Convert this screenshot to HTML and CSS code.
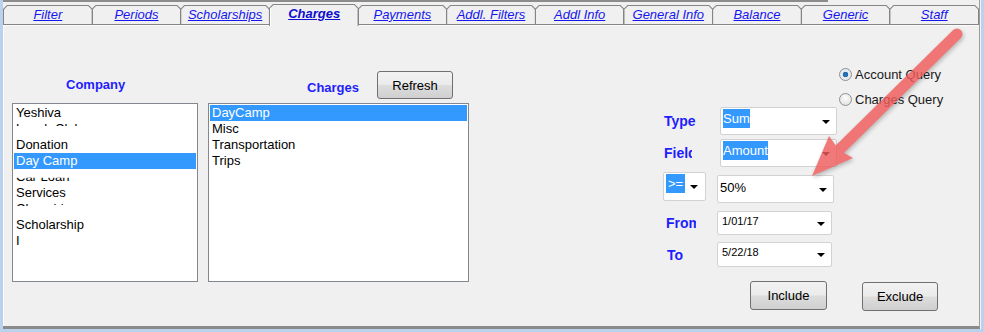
FILE: index.html
```html
<!DOCTYPE html>
<html>
<head lang="en">
    <meta charset="utf-8">
    <title>Charges</title>
    <link rel="stylesheet" href="styles.css">
</head>
<body>
<div class="frame">
    <div class="topline"></div>
    <ul class="tabs">
        <li><a href="#">Filter</a></li>
        <li><a href="#">Periods</a></li>
        <li><a href="#">Scholarships</a></li>
        <li class="active"><a href="#">Charges</a></li>
        <li><a href="#">Payments</a></li>
        <li><a href="#">Addl. Filters</a></li>
        <li><a href="#">Addl Info</a></li>
        <li><a href="#">General Info</a></li>
        <li><a href="#">Balance</a></li>
        <li><a href="#">Generic</a></li>
        <li><a href="#">Staff</a></li>
    </ul>
    <div class="panel">
        <div class="col company">
            <div class="head">
                <label class="title">Company</label>
            </div>
            <ul class="listbox">
                <li>Yeshiva</li>
                <li><span class="cut-top">Lunch Club</span></li>
                <li>Donation</li>
                <li class="sel">Day Camp</li>
                <li><span class="cut-bottom">Car Loan</span></li>
                <li>Services</li>
                <li><span class="cut-top">Chaveirim</span></li>
                <li>Scholarship</li>
                <li>I</li>
            </ul>
        </div>
        <div class="col charges">
            <div class="head">
                <label class="title">Charges</label>
                <button type="button" class="btn refresh">Refresh</button>
            </div>
            <ul class="listbox">
                <li class="sel">DayCamp</li>
                <li>Misc</li>
                <li>Transportation</li>
                <li>Trips</li>
            </ul>
        </div>
        <div class="query">
            <div class="radios">
                <div class="radio checked"><i></i>Account Query</div>
                <div class="radio"><i></i>Charges Query</div>
            </div>
            <div class="row r-type">
                <label class="lbl">Type</label>
                <div class="select"><span class="hl">Sum</span><b></b></div>
            </div>
            <div class="row r-field">
                <label class="lbl">Field</label>
                <div class="select"><span class="hl">Amount</span><b></b></div>
            </div>
            <div class="row r-op">
                <div class="select op"><span class="hl">&gt;=</span><b></b></div>
                <div class="select pct"><span>50%</span><b></b></div>
            </div>
            <div class="row r-from">
                <label class="lbl">From</label>
                <div class="select date"><span>1/01/17</span><b></b></div>
            </div>
            <div class="row r-to">
                <label class="lbl">To</label>
                <div class="select date"><span>5/22/18</span><b></b></div>
            </div>
            <div class="buttons">
                <button type="button" class="btn include">Include</button>
                <button type="button" class="btn exclude">Exclude</button>
            </div>
        </div>
    </div>
    <svg class="arrow" width="984" height="332" viewBox="0 0 984 332">
        <line x1="957" y1="34" x2="840" y2="149" stroke="#f05c5c" stroke-width="11" stroke-linecap="round"/>
        <polygon points="812,176 829,136 839,150 853,158" fill="#f05c5c"/>
    </svg>
</div>
</body>
</html>
```

FILE: styles.css
```css
body {
    margin: 0;
    background-color: #bad2ec;
    font-family: "Liberation Sans", Arial, sans-serif;
    font-size: 13px;
}

ul {
    margin: 0;
    padding: 0;
    list-style: none;
}

.frame {
    position: relative;
    margin-left: 3px;
    width: 976px;
    height: 326px;
    background-color: #f0f0f0;
    border-right: 1px solid #9c9c9c;
    border-bottom: 3px solid #8a8a8a;
    box-shadow: 1px 0 0 #f4f4f4;
}

.topline {
    width: 825px;
    height: 2px;
    background-color: #8c8c8c;
}

/* tab strip */
.tabs {
    display: flex;
    height: 19px;
    margin-top: 3px;
    border-bottom: 1px solid #858585;
}
.tabs li {
    flex: 1;
    height: 19px;
    margin-left: -1px;
    background-color: #858585;
    clip-path: polygon(4px 0, calc(100% - 4px) 0, 100% 4px, 100% 100%, 0 100%, 0 4px);
}
.tabs li:first-child {
    margin-left: 0;
}
.tabs li a {
    display: block;
    height: 18px;
    margin: 1px 1px 0;
    background-color: #f0f0f0;
    clip-path: polygon(3.5px 0, calc(100% - 3.5px) 0, 100% 3.5px, 100% 100%, 0 100%, 0 3.5px);
    color: #1616ee;
    font-style: italic;
    text-align: center;
    line-height: 18px;
}
.tabs li.active {
    position: relative;
    z-index: 1;
    height: 22px;
    margin-top: -1px;
}
.tabs li.active a {
    height: 21px;
    border-left: 1px solid #fff;
    font-weight: bold;
    color: #0c0cd2;
}

.panel {
    display: flex;
    height: 300px;
    border-top: 1px solid #fbfbfb;
    border-left: 1px solid #fbfbfb;
    padding-left: 8px;
}

.col .head {
    display: flex;
    align-items: flex-end;
    height: 77px;
}
.title {
    color: #1e1eff;
    font-weight: bold;
    line-height: 16px;
}
.company {
    width: 186px;
}
.company .title {
    margin: 0 0 10px 54px;
}
.charges {
    width: 261px;
    margin-left: 10px;
}
.charges .title {
    margin: 0 0 7px 99px;
}

.listbox {
    box-sizing: border-box;
    height: 179px;
    padding: 1px;
    background-color: #fff;
    border: 1px solid #828790;
    overflow: hidden;
}
.listbox li {
    height: 16px;
    padding-left: 2px;
    line-height: 16px;
    color: #000;
    white-space: nowrap;
}
.listbox li.sel {
    background-color: #3399ff;
    color: #fff;
}
.cut-top {
    display: inline-block;
    clip-path: inset(0 0 68% 0);
}
.cut-bottom {
    display: inline-block;
    clip-path: inset(55% 0 0 0);
}

.btn {
    box-sizing: border-box;
    padding: 0;
    border: 1px solid #707070;
    border-radius: 3px;
    background: linear-gradient(#f2f2f2, #ebebeb 48%, #dddddd 52%, #cfcfcf);
    font-family: "Liberation Sans", Arial, sans-serif;
    font-size: 13px;
    color: #000;
}
.refresh {
    width: 76px;
    height: 28px;
    margin: 0 0 4px 18px;
}

/* right hand side */
.query {
    flex: 1;
    margin-left: 194px;
}
.radios {
    margin-left: 176px;
    padding-top: 38px;
}
.radio {
    display: flex;
    align-items: center;
    height: 20px;
    color: #1a1a1a;
}
.radio + .radio {
    margin-top: 5px;
}
.radio i {
    box-sizing: border-box;
    width: 13px;
    height: 13px;
    margin-right: 3px;
    border: 1px solid #8e8f8f;
    border-radius: 50%;
    background: radial-gradient(circle at 50% 35%, #fdfdfd, #dcdcdc);
}
.radio.checked i {
    background: radial-gradient(circle, #1c7fc4 0, #2a63a8 2.5px, #dfe6ee 3px, #f4f4f4);
}

.row {
    display: flex;
    align-items: center;
}
.lbl {
    width: 56px;
    color: #1e1eff;
    font-size: 14px;
    font-weight: bold;
    white-space: nowrap;
    overflow: hidden;
}
.select {
    box-sizing: border-box;
    display: flex;
    align-items: flex-start;
    width: 117px;
    height: 28px;
    padding: 1px 6px 0 2px;
    background-color: #fff;
    border: 1px solid #d2d2d2;
    border-radius: 2px;
    line-height: 19px;
}
.select b {
    align-self: center;
    margin-left: auto;
    border-left: 4px solid transparent;
    border-right: 4px solid transparent;
    border-top: 4px solid #000;
}
.hl {
    background-color: #3399ff;
    color: #fff;
}

.r-type {
    margin-top: -2px;
}
.r-type .lbl,
.r-field .lbl {
    padding-left: 1px;
}
.r-field {
    margin-top: 4px;
}
.r-field .lbl {
    width: 28px;
    margin-right: 28px;
}
.r-op {
    align-items: flex-start;
    margin-top: 5px;
}
.select.op {
    width: 43px;
    height: 29px;
    padding-left: 2px;
    padding-right: 7px;
}
.select.op .hl {
    padding: 0 2px;
}
.select.pct {
    margin: 3px 0 0 11px;
    padding-top: 2px;
    padding-left: 2px;
}
.r-from {
    margin-top: 8px;
}
.r-from .lbl {
    width: 30px;
    margin-left: 3px;
    margin-right: 21px;
}
.r-to {
    margin-top: 7px;
}
.r-to .lbl {
    width: 30px;
    margin-left: 4px;
    margin-right: 20px;
}
.select.date {
    width: 115px;
    height: 24px;
    padding-left: 4px;
    font-size: 11px;
    line-height: 16px;
}
.r-to .select.date {
    height: 25px;
}

.buttons {
    display: flex;
    align-items: flex-start;
    margin-top: 14px;
}
.include {
    width: 77px;
    height: 29px;
    margin-left: 87px;
}
.exclude {
    width: 76px;
    height: 29px;
    margin: 1px 0 0 35px;
}

.arrow {
    position: absolute;
    left: -3px;
    top: 0;
    pointer-events: none;
    opacity: 0.82;
    filter: drop-shadow(1px 2px 2px rgba(0, 0, 0, 0.3));
}
```
